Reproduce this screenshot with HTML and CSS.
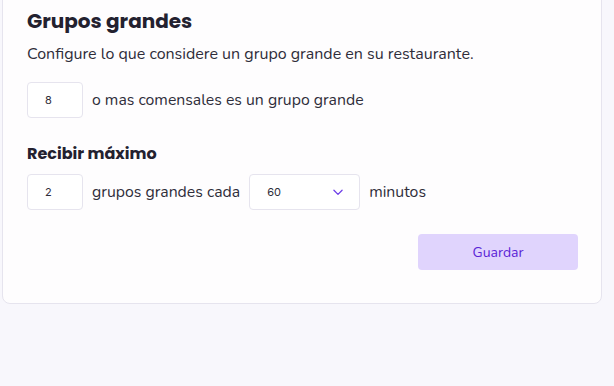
FILE: index.html
```html
<!DOCTYPE html>
<html lang="es">
<head>
    <meta charset="UTF-8">
    <meta name="viewport" content="width=device-width, initial-scale=1.0">
    <title>Grupos grandes</title>
    <link rel="stylesheet" href="styles.css">
</head>
<body>

<div class="card">
    <h2 class="card-title">Grupos grandes</h2>
    <p class="card-desc">Configure lo que considere un grupo grande en su restaurante.</p>

    <div class="form-row">
        <input type="text" class="num-input" value="8">
        <span class="row-text">o mas comensales es un grupo grande</span>
    </div>

    <h3 class="section-title">Recibir máximo</h3>
    <div class="form-row">
        <input type="text" class="num-input" value="2">
        <span class="row-text">grupos grandes cada</span>
        <div class="select-box">
            <span>60</span>
            <svg width="14" height="14" viewBox="0 0 24 24" fill="none" stroke="#6d3ee8" stroke-width="2.2" stroke-linecap="round" stroke-linejoin="round"><path d="M5 9l7 7 7-7"/></svg>
        </div>
        <span class="row-text">minutos</span>
    </div>

    <div class="actions">
        <button class="save-btn">Guardar</button>
    </div>
</div>

</body>
</html>
```

FILE: styles.css
```css
body {
    margin: 0;
    background: #f8f7fc;
    font-family: "Nunito", Lato, sans-serif;
    color: #2f2d3a;
}
.card {
    margin: -13px 12px 0 2px;
    padding: 20px 23px 33px 24px;
    background: #fefdfe;
    border: 1px solid #e6e4ee;
    border-radius: 8px;
}
.card-title {
    margin: 0;
    font-family: "Poppins", Inter, sans-serif;
    font-size: 20px;
    font-weight: 700;
    color: #23212f;
    line-height: 26px;
}
.card-desc {
    margin: 10px 0 0;
    font-size: 16px;
    line-height: 20px;
}
.form-row {
    display: flex;
    align-items: center;
    gap: 9px;
}
.card-desc + .form-row {
    margin-top: 18px;
}
.num-input {
    box-sizing: border-box;
    width: 56px;
    height: 36px;
    padding: 0 0 0 17px;
    border: 1px solid #e6e4ee;
    border-radius: 4px;
    background: #fff;
    font-family: Inter, sans-serif;
    font-size: 11px;
    color: #2f2d3a;
    outline: none;
}
.row-text {
    font-size: 15.8px;
}
.section-title {
    margin: 26px 0 10px;
    font-family: "Poppins", Inter, sans-serif;
    font-size: 16px;
    font-weight: 700;
    color: #23212f;
    line-height: 20px;
}
.select-box {
    box-sizing: border-box;
    width: 111px;
    height: 36px;
    display: flex;
    align-items: center;
    justify-content: space-between;
    padding: 0 14px 0 17px;
    border: 1px solid #e6e4ee;
    border-radius: 4px;
    background: #fff;
    font-family: Inter, sans-serif;
    font-size: 11px;
}
.actions {
    display: flex;
    justify-content: flex-end;
    margin-top: 24px;
}
.save-btn {
    width: 160px;
    height: 36px;
    border: none;
    border-radius: 4px;
    background: #e0d4fd;
    color: #5b24d6;
    font-family: "Nunito", Lato, sans-serif;
    font-size: 14px;
    cursor: pointer;
}
```
